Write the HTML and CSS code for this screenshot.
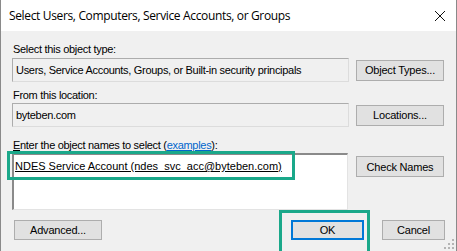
FILE: index.html
```html
<!DOCTYPE html>
<html lang="en">

<head>
    <meta charset="UTF-8">
    <meta name="viewport" content="width=device-width, initial-scale=1.0">
    <title>Select Users</title>
    <link rel="stylesheet" href="styles.css">
</head>

<body>
    <div class="dialog">
        <div class="titlebar">
            <span class="title">Select Users, Computers, Service Accounts, or Groups</span>
            <svg class="close" width="12" height="12" viewBox="0 0 12 12">
                <path d="M1 1 L11 11 M11 1 L1 11" stroke="#111" stroke-width="1" fill="none" />
            </svg>
        </div>
        <div class="content">
            <div class="label first">Select this object type:</div>
            <div class="row">
                <div class="field">Users, Service Accounts, Groups, or Built-in security principals</div>
                <button class="btn">Object Types...</button>
            </div>
            <div class="label">From this location:</div>
            <div class="row">
                <div class="field">byteben.com</div>
                <button class="btn">Locations...</button>
            </div>
            <div class="label third"><u>E</u>nter the object names to select (<a class="link">examples</a>):</div>
            <div class="row top">
                <div class="names"><span class="entry">NDES Service Account (ndes_svc_acc@byteben.com)</span></div>
                <button class="btn check">Check Names</button>
            </div>
            <div class="footer">
                <button class="btn advanced">Advanced...</button>
                <button class="btn ok">OK</button>
                <button class="btn cancel">Cancel</button>
            </div>
        </div>
        <svg class="grip" width="10" height="10" viewBox="0 0 10 10">
            <rect x="8" y="0" width="2" height="2" fill="#b4b4b4" />
            <rect x="4" y="4" width="2" height="2" fill="#b4b4b4" />
            <rect x="8" y="4" width="2" height="2" fill="#b4b4b4" />
            <rect x="0" y="8" width="2" height="2" fill="#b4b4b4" />
            <rect x="4" y="8" width="2" height="2" fill="#b4b4b4" />
            <rect x="8" y="8" width="2" height="2" fill="#b4b4b4" />
        </svg>
        <div class="mark mark-entry"></div>
        <div class="mark mark-ok"></div>
    </div>
</body>

</html>
```

FILE: styles.css
```css
body {
    margin: 0;
    font-family: "Liberation Sans", Arial, sans-serif;
    font-size: 11px;
    letter-spacing: -0.3px;
    color: #000;
    overflow: hidden;
}

.dialog {
    position: relative;
    width: 457px;
    height: 251px;
    box-sizing: border-box;
    background-color: #f0f0f0;
    border-left: 1px solid #8a8a8a;
    border-right: 1px solid #8a8a8a;
    overflow: hidden;
}

.titlebar {
    height: 31px;
    background-color: #fff;
    display: flex;
    align-items: center;
    justify-content: space-between;
    padding: 0 10px 0 8px;
}

.title {
    font-family: "Open Sans", "Noto Sans", sans-serif;
    font-size: 12px;
    color: #000;
    letter-spacing: -0.35px;
}

.content {
    padding: 12px 0 0 11px;
}

.label {
    height: 13px;
    line-height: 13px;
    margin: 7px 0 1px 1px;
}

.label.first {
    margin-top: 0;
    margin-bottom: 2px;
}

.label.third {
    margin-top: 12px;
}

.link {
    color: #0066cc;
    text-decoration: underline;
}

.row {
    display: grid;
    grid-template-columns: 337px 88px;
    column-gap: 7px;
    align-items: center;
}

.row.top {
    align-items: start;
}

.field {
    height: 24px;
    box-sizing: border-box;
    line-height: 22px;
    padding-left: 3px;
    background-color: #f0f0f0;
    border: 1px solid #acacac;
    border-right-color: #dcdcdc;
    border-bottom-color: #dcdcdc;
    white-space: nowrap;
    overflow: hidden;
}

.names {
    height: 57px;
    width: 336px;
    box-sizing: border-box;
    background-color: #fff;
    border: 1px solid #e3e3e3;
    border-top: 2px solid #8a8a8a;
    border-left: 2px solid #8a8a8a;
    padding: 5px 0 0 1px;
}

.entry {
    text-decoration: underline;
    letter-spacing: 0;
}

.btn {
    font-family: "Liberation Sans", Arial, sans-serif;
    font-size: 11px;
    letter-spacing: -0.2px;
    color: #000;
    height: 21px;
    padding: 0;
    background-color: #e1e1e1;
    border: 1px solid #adadad;
}

.check {
    margin-top: 3px;
}

.footer {
    display: flex;
    margin-top: 10px;
    padding-left: 2px;
}

.footer .btn {
    height: 20px;
}

.advanced {
    width: 88px;
}

.ok {
    width: 73px;
    margin-left: 189px;
    border: 2px solid #0078d7;
}

.cancel {
    width: 63px;
    margin-left: 18px;
}

.close {
    display: block;
}

.grip {
    position: absolute;
    right: 2px;
    bottom: 2px;
}

.mark {
    position: absolute;
    border: 3px solid #1aa88a;
    box-sizing: border-box;
}

.mark-entry {
    left: 6px;
    top: 151px;
    width: 288px;
    height: 29px;
}

.mark-ok {
    left: 278px;
    top: 210px;
    width: 91px;
    height: 50px;
}
```
